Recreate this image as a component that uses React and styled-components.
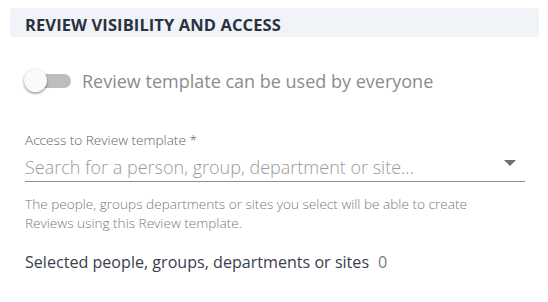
import React from 'react';
import styled, { createGlobalStyle } from 'styled-components';

const Global = createGlobalStyle`
    body {
        margin: 0;
        background: #ffffff;
        font-family: "Open Sans", "Noto Sans", sans-serif;
    }
`;

const Page = styled.div`
    width: 548px;
    height: 302px;
    padding: 8px 9px 0 10px;
    box-sizing: border-box;
`;

const SectionHeader = styled.div`
    background-color: #f0f3f7;
    border-radius: 3px;
    height: 29px;
    display: flex;
    align-items: center;
    padding: 3px 0 0 15px;
    box-sizing: border-box;
`;

const Title = styled.h2`
    margin: 0;
    font-size: 16.5px;
    font-weight: 700;
    color: #2a3242;
    letter-spacing: 0.1px;
`;

const Body = styled.div`
    padding: 0 14px 0 15px;
`;

const ToggleRow = styled.label`
    display: flex;
    align-items: center;
    margin-top: 31px;
    height: 26px;
`;

const Track = styled.span`
    position: relative;
    width: 44px;
    height: 14px;
    border-radius: 7px;
    background: #bdbdbd;
    margin-left: 2px;
    flex-shrink: 0;
`;

const Knob = styled.span`
    position: absolute;
    left: -3px;
    top: -5px;
    width: 23px;
    height: 23px;
    border-radius: 50%;
    background: #fafafa;
    box-shadow: 0 1px 3px rgba(0, 0, 0, 0.35), 0 2px 2px rgba(0, 0, 0, 0.12);
`;

const ToggleLabel = styled.span`
    margin-left: 11px;
    font-size: 18px;
    color: #8c8c8c;
`;

const Field = styled.div`
    margin-top: 37px;
`;

const FieldLabel = styled.div`
    font-size: 13.6px;
    font-weight: 300;
    color: #5f5f5f;
    line-height: 18px;
`;

const InputRow = styled.div`
    display: flex;
    align-items: center;
    justify-content: space-between;
    height: 28px;
    padding-top: 4px;
    border-bottom: 1px solid #8f8f8f;
`;

const Placeholder = styled.span`
    font-size: 18px;
    font-weight: 300;
    color: #9a9a9a;
`;

const Caret = styled.svg`
    width: 12px;
    height: 6px;
    margin-right: 9px;
    margin-top: -8px;
`;

const Helper = styled.p`
    margin: 12px 0 0;
    font-size: 13.6px;
    font-weight: 300;
    line-height: 19px;
    color: #7a7a7a;
`;

const Selected = styled.div`
    margin-top: 19px;
    font-size: 16.1px;
    color: #3a404c;
`;

const Count = styled.span`
    margin-left: 9px;
    color: #7a7a7a;
`;

export default function App() {
    return (
        <>
            <Global />
            <Page>
                <SectionHeader>
                    <Title>REVIEW VISIBILITY AND ACCESS</Title>
                </SectionHeader>
                <Body>
                    <ToggleRow>
                        <Track>
                            <Knob />
                        </Track>
                        <ToggleLabel>Review template can be used by everyone</ToggleLabel>
                    </ToggleRow>
                    <Field>
                        <FieldLabel>Access to Review template *</FieldLabel>
                        <InputRow>
                            <Placeholder>Search for a person, group, department or site...</Placeholder>
                            <Caret viewBox="0 0 12 6">
                                <path d="M0 0 L12 0 L6 6 Z" fill="#6f6f6f" />
                            </Caret>
                        </InputRow>
                    </Field>
                    <Helper>
                        The people, groups departments or sites you select will be able to create
                        <br />
                        Reviews using this Review template.
                    </Helper>
                    <Selected>
                        Selected people, groups, departments or sites<Count>0</Count>
                    </Selected>
                </Body>
            </Page>
        </>
    );
}
